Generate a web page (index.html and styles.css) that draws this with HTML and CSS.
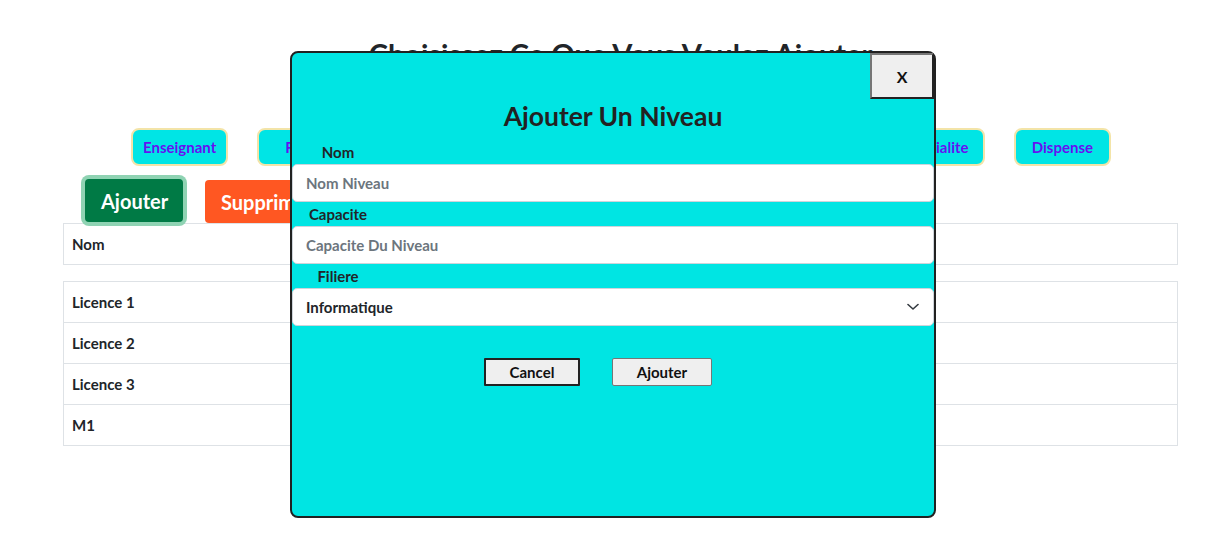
FILE: index.html
```html
<!DOCTYPE html>
<html lang="fr">
<head>
<meta charset="utf-8">
<title>Ajouter Un Niveau</title>
<link rel="stylesheet" href="styles.css">
</head>
<body>
<div class="page">
  <h1 class="title">Choisissez Ce Que Vous Voulez Ajouter</h1>
  <nav class="nav">
    <button class="nav-btn">Enseignant</button>
    <button class="nav-btn">Filiere</button>
    <button class="nav-btn">Niveau</button>
    <button class="nav-btn">Module</button>
    <button class="nav-btn">Semestre</button>
    <button class="nav-btn">Salle</button>
    <button class="nav-btn">Specialite</button>
    <button class="nav-btn">Dispense</button>
  </nav>
  <div class="actions">
    <button class="btn btn-add">Ajouter</button>
    <button class="btn btn-del">Supprimer</button>
  </div>
  <div class="table head">
    <div class="row">Nom</div>
  </div>
  <div class="table body">
    <div class="row">Licence 1</div>
    <div class="row">Licence 2</div>
    <div class="row">Licence 3</div>
    <div class="row">M1</div>
  </div>
</div>

<div class="modal">
  <button class="close">X</button>
  <h2 class="modal-title">Ajouter Un Niveau</h2>
  <label class="label">Nom</label>
  <input class="field" type="text" placeholder="Nom Niveau">
  <label class="label">Capacite</label>
  <input class="field" type="text" placeholder="Capacite Du Niveau">
  <label class="label">Filiere</label>
  <div class="select-wrap">
    <select class="field select">
      <option>Informatique</option>
    </select>
    <svg class="chevron" width="12" height="8" viewBox="0 0 12 8"><path d="M1 1.5 L6 6 L11 1.5" fill="none" stroke="#343a40" stroke-width="1.6" stroke-linecap="round" stroke-linejoin="round"/></svg>
  </div>
  <div class="modal-actions">
    <button class="mbtn mbtn-cancel">Cancel</button>
    <button class="mbtn">Ajouter</button>
  </div>
</div>
</body>
</html>
```
FILE: styles.css
```css
* { box-sizing: border-box; }
html, body { margin: 0; padding: 0; background: #fff; }
body {
  font-family: Lato, "Noto Sans", "Liberation Sans", sans-serif;
  font-weight: 700;
  color: #212529;
}
.page { padding: 0 52px 0 63px; }
.title {
  margin: 0;
  padding-top: 36px;
  font-size: 29px;
  line-height: 36px;
  text-align: center;
  color: #212529;
  font-weight: 700;
}
.nav {
  display: flex;
  justify-content: space-between;
  width: 980px;
  margin: 56px 0 0 68px;
}
.nav-btn {
  height: 38px;
  padding: 0 10px;
  min-width: 97px;
  background: #00e5e5;
  border: 2px solid #f3e4a8;
  border-radius: 8px;
  color: #6610f2;
  font-family: inherit;
  font-weight: 700;
  font-size: 15px;
}
.actions {
  display: flex;
  gap: 22px;
  margin-top: 13px;
  padding-left: 22px;
}
.btn {
  height: 43px;
  padding: 0 16px;
  border: none;
  border-radius: 4px;
  color: #fff;
  font-family: inherit;
  font-weight: 700;
  font-size: 20px;
}
.btn-add {
  width: 98px;
  background: #007a45;
  box-shadow: 0 0 0 4px #8fd3b3;
}
.btn-del { background: #ff5722; margin-top: 1px; }
.table { border: 1px solid #dee2e6; border-bottom: none; }
.head { margin-top: 0; }
.body { margin-top: 16px; }
.row {
  height: 41px;
  display: flex;
  align-items: center;
  padding-left: 8px;
  font-size: 15px;
  border-bottom: 1px solid #dee2e6;
}

.modal {
  position: absolute;
  left: 290px;
  top: 51px;
  width: 646px;
  height: 467px;
  background: #00e5e3;
  border: 2px solid #212121;
  border-radius: 8px;
}
.close {
  position: absolute;
  right: 0;
  top: 0;
  width: 64px;
  height: 46px;
  background: #efefef;
  border-style: solid;
  border-width: 2px;
  border-color: #767676 #222 #222 #767676;
  font-family: inherit;
  font-weight: 700;
  font-size: 16px;
  color: #111;
}
.modal-title {
  margin: 46px 0 0;
  font-size: 26.5px;
  line-height: 34px;
  text-align: center;
  font-weight: 700;
  color: #222;
}
.label {
  display: block;
  width: 92px;
  height: 24px;
  line-height: 24px;
  margin-top: 7px;
  text-align: center;
  font-size: 15px;
}
.field + .label { margin-top: 0; }
.field {
  display: block;
  width: 100%;
  height: 38px;
  padding: 0 13px;
  background: #fff;
  border: 1px solid #ced4da;
  border-radius: 5px;
  font-family: inherit;
  font-weight: 700;
  font-size: 15px;
  color: #212529;
}
.field::placeholder { color: #6c757d; }
.select-wrap { position: relative; }
.select { appearance: none; -webkit-appearance: none; }
.chevron { position: absolute; right: 15px; top: 15px; }
.modal-actions {
  display: flex;
  justify-content: center;
  gap: 32px;
  margin-top: 32px;
  padding-right: 30px;
}
.mbtn {
  height: 28px;
  width: 100px;
  background: #efefef;
  border: 1px solid #767676;
  border-radius: 2px;
  font-family: inherit;
  font-weight: 700;
  font-size: 15px;
  color: #111;
}
.mbtn-cancel { width: 96px; border: 2px solid #222; border-radius: 1px; }
```
